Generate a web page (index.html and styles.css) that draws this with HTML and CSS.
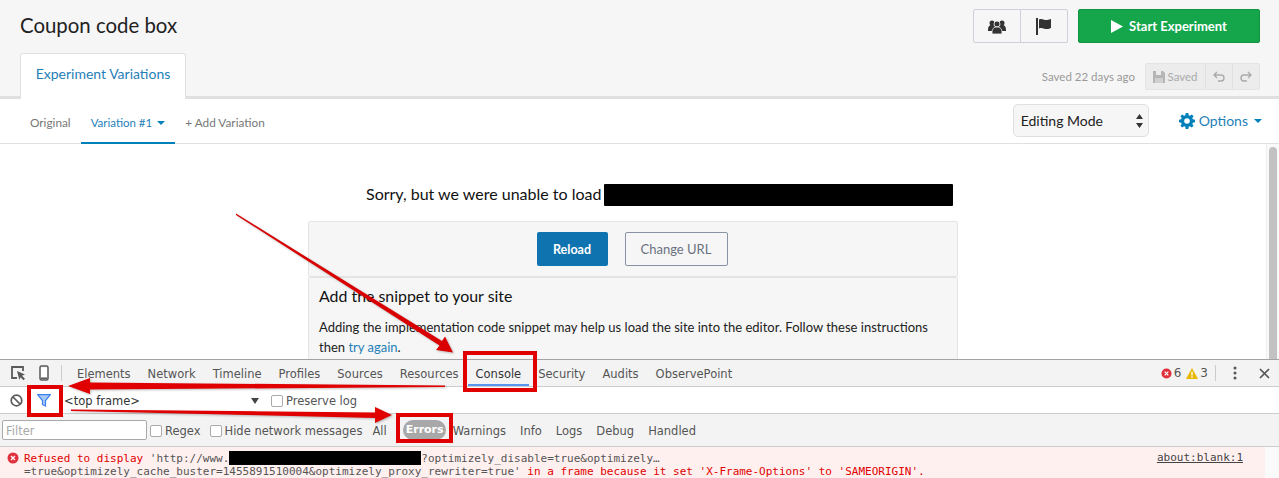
FILE: index.html
```html
<!DOCTYPE html>
<html lang="en">
<head>
<meta charset="utf-8">
<title>Coupon code box</title>
<link rel="stylesheet" href="styles.css">
</head>
<body>
<div class="page">
  <header class="head">
    <div class="head-top">
      <h1 class="title">Coupon code box</h1>
      <div class="head-actions">
        <div class="btn-group">
          <span class="icon-btn"><svg width="18" height="15" viewBox="0 0 18 15"><circle cx="4" cy="4" r="2.5" fill="#333"/><circle cx="14" cy="4" r="2.5" fill="#333"/><path d="M0 11c0-3 1-5 4-5s4 2 4 5v1H0zM10 11c0-3 1-5 4-5s4 2 4 5v1h-8z" fill="#333"/><circle cx="9" cy="5" r="3" fill="#333" stroke="#f6f6f6" stroke-width=".8"/><path d="M4 14c0-4 1.500-6 5-6s5 2 5 6v1H4z" fill="#333" stroke="#f6f6f6" stroke-width=".8"/></svg></span>
          <span class="icon-btn"><svg width="16" height="17" viewBox="0 0 16 17"><rect x="0" y="0" width="2" height="17" fill="#333"/><path d="M3 1.500c3-1.500 5 1 8 .5 1.500-.2 3-.7 4-1v9c-1 .5-2.500 1-4 1-3 .3-5-2-8-.5z" fill="#333"/></svg></span>
        </div>
        <button class="btn-start"><svg width="12" height="13" viewBox="0 0 12 13"><path d="M0 0l12 6.500L0 13z" fill="#fff"/></svg>Start Experiment</button>
      </div>
    </div>
    <div class="head-bottom">
      <div class="tab-active">Experiment Variations</div>
      <div class="save-area">
        <span class="saved-time">Saved 22 days ago</span>
        <div class="save-group">
          <span class="save-btn save-main"><svg width="12" height="12" viewBox="0 0 12 12"><path d="M0 0h10l2 2v10H0z" fill="#b5b5b5"/><rect x="3" y="0" width="5" height="4" fill="#ececec"/><rect x="2" y="7" width="8" height="5" fill="#d0d0d0"/></svg>Saved</span>
          <span class="save-btn"><svg width="12" height="11" viewBox="0 0 12 11"><path d="M4 1L1 4l3 3M1 4h7c2 0 3 1.500 3 3s-1 3-3 3H5" fill="none" stroke="#aaa" stroke-width="1.400"/></svg></span>
          <span class="save-btn"><svg width="12" height="11" viewBox="0 0 12 11"><path d="M8 1l3 3-3 3M11 4H4C2 4 1 5.500 1 7s1 3 3 3h3" fill="none" stroke="#aaa" stroke-width="1.400"/></svg></span>
        </div>
      </div>
    </div>
  </header>

  <nav class="vars">
    <div class="var-tabs">
      <span class="var-tab">Original</span>
      <span class="var-tab var-active">Variation #1<i class="caret"></i></span>
      <span class="var-tab">+ Add Variation</span>
    </div>
    <div class="var-right">
      <div class="mode-select">Editing Mode<svg width="7" height="14" viewBox="0 0 7 14"><path d="M3.500 0L7 5H0zM3.500 14L0 9h7z" fill="#333"/></svg></div>
      <span class="options"><svg width="16" height="16" viewBox="0 0 16 16"><path d="M6.700 0h2.600l.4 2.200 1.200.5L12.800 1.400l1.800 1.800-1.300 1.900.5 1.200 2.200.4v2.600l-2.200.4-.5 1.200 1.300 1.900-1.800 1.800-1.900-1.300-1.200.5-.4 2.200H6.700l-.4-2.200-1.200-.5-1.900 1.300-1.800-1.800 1.300-1.900-.5-1.200L0 9.300V6.700l2.200-.4.5-1.200-1.300-1.900 1.800-1.800 1.900 1.300 1.200-.5z" fill="#0081ba"/><circle cx="8" cy="8" r="2.800" fill="#fff"/></svg>Options<i class="caret"></i></span>
    </div>
  </nav>

  <main class="stage">
    <div class="stage-body">
      <p class="sorry">Sorry, but we were unable to load<span class="redact-url"></span></p>
      <div class="panel panel-actions">
        <button class="btn-reload">Reload</button>
        <button class="btn-url">Change URL</button>
      </div>
      <div class="panel panel-snippet">
        <h2 class="snippet-title">Add the snippet to your site</h2>
        <p class="snippet-text">Adding the implementation code snippet may help us load the site into the editor. Follow these instructions then <a class="link">try again</a>.</p>
      </div>
    </div>
    <div class="scrollbar"><div class="thumb"></div></div>
  </main>

  <section class="devtools">
    <div class="dt-tabs">
      <div class="dt-tools">
        <svg width="16" height="16" viewBox="0 0 16 16"><path d="M13 6V2H2v11h5" fill="none" stroke="#5a5a5a" stroke-width="1.800"/><path d="M7 6l8 3.500-3 1.300 3 3-1.500 1.500-3-3L9.300 15z" fill="#5a5a5a"/></svg>
        <svg width="10" height="16" viewBox="0 0 10 16"><rect x="1" y="1" width="8" height="14" rx="1.500" fill="none" stroke="#5a5a5a" stroke-width="1.500"/><rect x="2" y="3" width="6" height="9" fill="#fff"/><rect x="2" y="12.500" width="6" height="1.500" fill="#5a5a5a"/></svg>
      </div>
      <div class="dt-tablist">
        <span class="dt-tab">Elements</span>
        <span class="dt-tab">Network</span>
        <span class="dt-tab">Timeline</span>
        <span class="dt-tab">Profiles</span>
        <span class="dt-tab">Sources</span>
        <span class="dt-tab">Resources</span>
        <span class="dt-tab dt-console">Console</span>
        <span class="dt-tab">Security</span>
        <span class="dt-tab">Audits</span>
        <span class="dt-tab">ObservePoint</span>
      </div>
      <div class="dt-status">
        <svg width="11" height="11" viewBox="0 0 12 12"><circle cx="6" cy="6" r="5.500" fill="#e0303c"/><path d="M4 4l4 4M8 4l-4 4" stroke="#fff" stroke-width="1.300"/></svg><span>6</span>
        <svg class="warn" width="12" height="11" viewBox="0 0 12 11"><path d="M6 0l6 11H0z" fill="#eab700"/><rect x="5.300" y="3.500" width="1.400" height="4" fill="#fff"/><rect x="5.300" y="8.300" width="1.400" height="1.400" fill="#fff"/></svg><span>3</span>
        <i class="dt-sep"></i>
        <svg class="dots" width="4" height="14" viewBox="0 0 4 14"><circle cx="2" cy="2" r="1.500" fill="#555"/><circle cx="2" cy="7" r="1.500" fill="#555"/><circle cx="2" cy="12" r="1.500" fill="#555"/></svg>
        <svg class="close" width="11" height="11" viewBox="0 0 11 11"><path d="M1 1l9 9M10 1l-9 9" stroke="#555" stroke-width="1.700"/></svg>
      </div>
    </div>
    <div class="dt-toolbar">
      <svg class="no-icon" width="13" height="13" viewBox="0 0 13 13"><circle cx="6.500" cy="6.500" r="5.300" fill="none" stroke="#5a5a5a" stroke-width="1.700"/><path d="M3 3l7 7" stroke="#5a5a5a" stroke-width="1.700"/></svg>
      <svg class="funnel" width="14" height="13" viewBox="0 0 14 13"><path d="M.7.700h12.600L8.500 6.500V12l-3-1.500v-4z" fill="#a9c9f5" stroke="#3b82ee" stroke-width="1.200"/></svg>
      <div class="frame-select">&lt;top frame&gt;<i class="frame-caret"></i></div>
      <label class="dt-check dt-preserve"><i class="box"></i>Preserve log</label>
    </div>
    <div class="dt-filter">
      <span class="filter-input">Filter</span>
      <label class="dt-check"><i class="box"></i>Regex</label>
      <label class="dt-check"><i class="box"></i>Hide network messages</label>
      <span class="level level-all">All</span>
      <span class="level level-on">Errors</span>
      <span class="level">Warnings</span>
      <span class="level">Info</span>
      <span class="level">Logs</span>
      <span class="level">Debug</span>
      <span class="level">Handled</span>
    </div>
    <div class="dt-message">
      <div class="msg-main">
        <svg class="msg-icon" width="12" height="12" viewBox="0 0 12 12"><circle cx="6" cy="6" r="5.500" fill="#e0303c"/><path d="M4 4l4 4M8 4l-4 4" stroke="#fff" stroke-width="1.300"/></svg>
        <div class="msg-text">
          <div class="msg-line"><span class="red">Refused to display </span>'http://www.<span class="redact-msg"></span>?optimizely_disable=true&amp;optimizely…</div>
          <div class="msg-line">=true&amp;optimizely_cache_buster=1455891510004&amp;optimizely_proxy_rewriter=true'<span class="red"> in a frame because it set 'X-Frame-Options' to 'SAMEORIGIN'.</span></div>
        </div>
        <span class="msg-src">about:blank:1</span>
      </div>
      <div class="msg-gutter"></div>
    </div>
  </section>

  <div class="callout callout-console"></div>
  <div class="callout callout-funnel"></div>
  <div class="callout callout-errors"></div>
  <svg class="arrows" width="1279" height="478" viewBox="0 0 1279 478">
    <path d="M236 213.500L442 341l3-4.500 8 16-17-2.500 3.500-4.500L236 215z" fill="#d80000"/>
    <path d="M445 385.500L90 382.500V378L68 386l22 8v-4.500L445 387z" fill="#e00000"/>
    <path d="M71 409.500L375 412.500V407l17 8-17 8v-5L71 411z" fill="#e00000"/>
  </svg>
</div>
</body>
</html>
```

FILE: styles.css
```css
* { box-sizing: border-box; }
html, body { margin: 0; padding: 0; }
body { background: #fff; font-family: "Lato", "Liberation Sans", sans-serif; color: #222; overflow: hidden; }
.page { position: relative; width: 1279px; height: 478px; overflow: hidden; display: flex; flex-direction: column; }

.head { height: 99px; background: #f6f6f6; border-bottom: 3px solid #e0e0e0; padding: 9px 19px 0 20px; display: flex; flex-direction: column; flex: none; }
.head-top { display: flex; justify-content: space-between; align-items: flex-start; height: 44px; }
.title { margin: 0; font-size: 20.400px; font-weight: 400; line-height: 32px; color: #222; }
.head-actions { display: flex; gap: 10px; }
.btn-group { display: flex; width: 95px; height: 34px; border: 1px solid #d0d0dc; border-radius: 2px; }
.icon-btn { flex: 1; display: flex; align-items: center; justify-content: center; }
.icon-btn + .icon-btn { border-left: 1px solid #d0d0dc; }
.btn-start { width: 182px; height: 34px; background: #15a64c; border: 1px solid #12943f; border-radius: 2px; color: #fff; font: 700 13px "Lato", sans-serif; display: flex; align-items: center; justify-content: center; gap: 6px; padding: 0; }
.head-bottom { display: flex; justify-content: space-between; height: 43px; }
.tab-active { width: 166px; height: 46px; background: #fff; border: 1px solid #e0e0e0; border-bottom: 0; border-radius: 3px 3px 0 0; color: #1f7fb8; font-size: 14px; line-height: 39px; text-align: center; position: relative; z-index: 1; }
.save-area { display: flex; align-items: flex-start; gap: 10px; padding-top: 10px; }
.saved-time { font-size: 11.500px; color: #999; line-height: 27px; }
.save-group { display: flex; height: 27px; background: #ececec; border: 1px solid #e4e4e4; border-radius: 2px; color: #aaa; font-size: 11.500px; }
.save-btn { width: 27px; display: flex; align-items: center; justify-content: center; gap: 2px; }
.save-btn + .save-btn { border-left: 1px solid #e0e0e0; }
.save-main { width: 59px; }

.vars { height: 45px; flex: none; display: flex; justify-content: space-between; border-bottom: 1px solid #e0e0e0; padding: 0 17px 0 20px; }
.var-tabs { display: flex; }
.var-tab { padding: 0 10px; font-size: 11.800px; color: #777; line-height: 48px; height: 45px; }
.var-active { font-size: 11.500px; color: #1f7fb8; border-bottom: 2px solid #0081ba; }
.caret { display: inline-block; width: 0; height: 0; border: 4px solid transparent; border-top: 4px solid #0081ba; border-bottom: 0; margin-left: 5px; vertical-align: 2px; }
.var-right { display: flex; align-items: flex-start; gap: 30px; padding-top: 5px; }
.mode-select { width: 136px; height: 33px; background: #f6f6f6; border: 1px solid #e0e0e0; border-radius: 5px; display: flex; align-items: center; justify-content: space-between; padding: 0 5px 0 7px; font-size: 14px; color: #222; }
.options { display: flex; align-items: center; gap: 4px; font-size: 14px; color: #1f7fb8; height: 33px; }
.options .caret { margin-left: 2px; vertical-align: 0; }

.stage { flex: 1; display: flex; min-height: 0; overflow: hidden; }
.stage-body { flex: 1; display: flex; flex-direction: column; align-items: center; padding-top: 40px; }
.sorry { margin: 0 0 15px; width: 650px; height: 22px; font-size: 16px; line-height: 20px; padding-left: 58px; display: flex; color: #111; white-space: nowrap; }
.redact-url { width: 349px; height: 22px; background: #000; border-radius: 1px; margin-left: 3px; }
.panel { width: 650px; background: #f6f6f6; border: 1px solid #e4e4e4; flex: none; border-radius: 2px; }
.panel-actions { height: 56px; display: flex; justify-content: center; align-items: flex-start; gap: 17px; padding: 10px 2px 0 0; }
.btn-reload { width: 71px; height: 34px; background: #0f73b0; border: 0; border-radius: 2px; color: #fff; font: 700 12.500px "Lato", sans-serif; }
.btn-url { width: 103px; height: 34px; background: transparent; border: 1px solid #8a93a5; border-radius: 2px; color: #6a7280; font: 400 13px "Lato", sans-serif; }
.panel-snippet { height: 110px; padding: 8px 10px; }
.snippet-title { margin: 0 0 11px; font-size: 15.900px; font-weight: 400; line-height: 20px; color: #111; }
.snippet-text { margin: 0; font-size: 13px; line-height: 20px; color: #222; }
.link { color: #1f7fb8; }
.scrollbar { width: 13px; flex: none; background: #fafafa; border-left: 1px solid #eee; padding: 3px 2px 0 2px; }
.thumb { height: 300px; background: #c2c2c2; border-radius: 4px; }

.devtools { height: 119px; flex: none; background: #f3f3f3; border-top: 1px solid #a3a3a3; font-family: "DejaVu Sans", sans-serif; font-size: 11.500px; color: #555; display: flex; flex-direction: column; }
.dt-tabs { height: 27px; flex: none; display: flex; align-items: center; border-bottom: 1px solid #ccc; padding-left: 10px; position: relative; }
.dt-tools { display: flex; align-items: center; gap: 13px; width: 52px; height: 16px; border-right: 1px solid #ccc; }
.dt-tablist { display: flex; padding-left: 15px; gap: 17px; height: 26px; line-height: 29px; }
.dt-tab { display: block; white-space: nowrap; }
.dt-console { color: #333; border-bottom: 2px solid #5a97ee; padding: 0 8px; margin: 0 -8px; height: 26px; }
.dt-status { margin-left: auto; display: flex; align-items: center; gap: 2px; padding-right: 9px; font-size: 12px; }
.warn { margin-left: 3px; }
.dt-sep { width: 1px; height: 16px; background: #ccc; margin: 0 15px 0 5px; }
.close { margin-left: 20px; }
.dt-toolbar { height: 27px; flex: none; background: #fff; border-bottom: 1px solid #ccc; display: flex; align-items: center; padding-left: 10px; }
.funnel { margin-left: 14px; }
.frame-select { width: 195px; margin-left: 13px; padding-top: 2px; color: #333; position: relative; }
.frame-caret { position: absolute; right: 0; top: 6px; border: 4px solid transparent; border-top: 6px solid #444; border-bottom: 0; }
.dt-check { display: flex; align-items: center; gap: 3px; white-space: nowrap; padding-top: 2px; }
.dt-preserve { margin-left: 12px; }
.box { width: 12px; height: 12px; background: #fff; border: 1px solid #aaa; border-radius: 2px; display: block; }
.dt-filter { height: 33px; flex: none; display: flex; align-items: center; border-bottom: 1px solid #ccc; padding-left: 2px; }
.filter-input { width: 145px; height: 20px; background: #fff; border: 1px solid #aaa; border-radius: 2px; color: #aaa; line-height: 20px; padding-left: 3px; margin-right: 3px; }
.dt-filter .dt-check { margin-right: 9px; }
.level { padding: 2px 7px 0; }
.level-all { padding: 2px 16px 0 1px; }
.level-on { background: #a8a8a8; color: #fff; border-radius: 10px; height: 20px; line-height: 20px; font-weight: 700; padding: 0 3px; font-size: 11px; width: 43px; text-align: center; }
.dt-message { flex: 1; display: flex; min-height: 0; background: #fff; }
.msg-main { flex: 1; display: flex; align-items: flex-start; background: #fff0f0; padding: 4px 22px 0 7px; font-family: "DejaVu Sans Mono", monospace; font-size: 11px; line-height: 14px; color: #555; }
.msg-gutter { width: 14px; background: #fafafa; }
.msg-icon { margin: 1px 5px 0 0; flex: none; }
.msg-text { flex: 1; white-space: nowrap; }
.msg-line { height: 14px; }
.red { color: #e00000; white-space: pre; }
.redact-msg { display: inline-block; width: 192px; height: 14px; background: #000; vertical-align: -3px; }
.msg-src { text-decoration: underline; color: #444; }

.callout { position: absolute; border: 4px solid #e00000; }
.callout-console { left: 463px; top: 351px; width: 74px; height: 41px; }
.callout-funnel { left: 27px; top: 385px; width: 36px; height: 32px; }
.callout-errors { left: 396px; top: 413px; width: 57px; height: 30px; }
.arrows { position: absolute; left: 0; top: 0; pointer-events: none; filter: drop-shadow(1px 1px 1px rgba(0, 0, 0, .25)); }
```
